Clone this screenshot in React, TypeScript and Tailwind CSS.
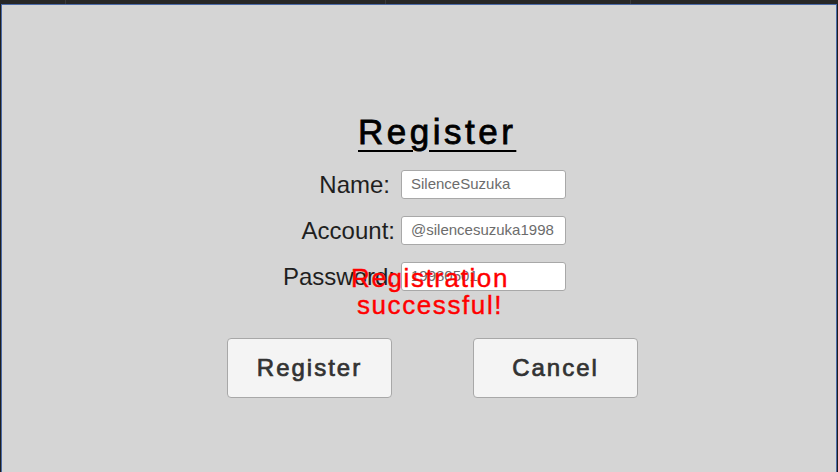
const fields = [
  { label: 'Name:', value: 'SilenceSuzuka', nudge: 'pr-[5px]' },
  { label: 'Account:', value: '@silencesuzuka1998', nudge: 'pr-0' },
  { label: 'Password:', value: '19980501', nudge: 'pr-0' },
];

function Field({ label, value, nudge }: { label: string; value: string; nudge: string }) {
  return (
    <div className="flex items-center">
      <span className={`w-[132px] text-right text-[24px] leading-[29px] text-[#1f1f1f] whitespace-nowrap ${nudge}`}>
        {label}
      </span>
      <div className="ml-[6px] w-[165px] h-[29px] flex items-center px-[9px] bg-white border border-[#a8a8a8] rounded-[3px] text-[15px] text-[#6c6c6c]">
        {value}
      </div>
    </div>
  );
}

function ActionButton({ children }: { children: string }) {
  return (
    <button className="w-[165px] h-[60px] bg-[#f4f4f4] border border-[#a8a8a8] rounded-[4px] text-[24px] tracking-[2px] text-[#323232] [-webkit-text-stroke-width:0.7px]">
      {children}
    </button>
  );
}

export default function App() {
  return (
    <div
      className="relative w-[838px] h-[472px] flex flex-col bg-[#1e1e1e] overflow-hidden"
      style={{ fontFamily: '"Liberation Sans", Arial, sans-serif' }}
    >
      {/* editor tab strip */}
      <div className="h-[4px] flex bg-[#272727]">
        <div className="w-[66px] border-r border-[#3a3a3a]" />
        <div className="w-[320px] border-r border-[#3a3a3a]" />
        <div className="w-[245px] border-r border-[#3a3a3a]" />
        <div className="flex-1" />
      </div>

      {/* game view */}
      <div className="flex-1 mx-px border border-b-0 border-[#4a69a6] bg-[#d5d5d5] flex flex-col pt-[107px]">
        <h1 className="self-start ml-[356px] text-[35px] leading-[40px] tracking-[3.5px] text-black underline decoration-2 underline-offset-[6px] [-webkit-text-stroke-width:0.8px]">
          Register
        </h1>

        <div className="self-start ml-[261px] mt-[18px] flex flex-col gap-[17px]">
          {fields.map((f) => (
            <Field key={f.label} {...f} />
          ))}
        </div>

        <div className="self-start ml-[225px] mt-[47px] flex gap-[81px]">
          <ActionButton>Register</ActionButton>
          <ActionButton>Cancel</ActionButton>
        </div>
      </div>

      {/* status message drawn over the form */}
      <div className="absolute left-[330px] top-[265px] w-[200px] text-center text-[26px] leading-[27px] tracking-[1.6px] text-[#ff0000] [-webkit-text-stroke-width:0.4px]">
        Registration
        <br />
        successful!
      </div>
    </div>
  );
}
